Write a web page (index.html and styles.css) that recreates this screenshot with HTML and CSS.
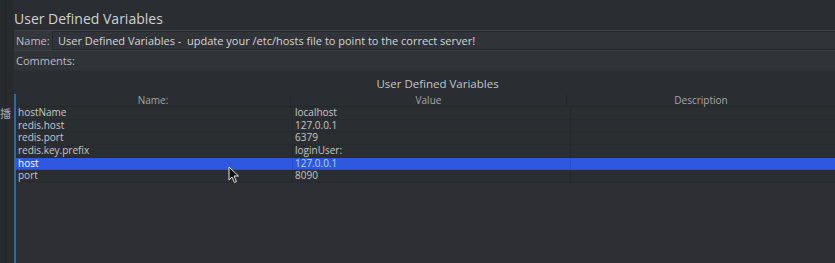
FILE: index.html
```html
<!DOCTYPE html>
<html lang="en">
<head>
    <meta charset="UTF-8">
    <title>User Defined Variables</title>
    <link rel="stylesheet" href="styles.css">
</head>
<body>
    <div class="gutter"><span class="side-char">播</span></div>

    <div class="panel">
        <div class="title">User Defined Variables</div>

        <div class="field-row name-row">
            <span class="label">Name:</span>
            <div class="input">User Defined Variables -&nbsp; update your /etc/hosts file to point to the correct server!</div>
        </div>
        <div class="field-row comments-row">
            <span class="label">Comments:</span>
        </div>

        <div class="table-title">User Defined Variables</div>

        <div class="table">
            <div class="row head">
                <div class="cell c-name">Name:</div>
                <div class="cell c-value">Value</div>
                <div class="cell c-desc">Description</div>
            </div>
            <div class="row">
                <div class="cell c-name">hostName</div>
                <div class="cell c-value">localhost</div>
                <div class="cell c-desc"></div>
            </div>
            <div class="row">
                <div class="cell c-name">redis.host</div>
                <div class="cell c-value">127.0.0.1</div>
                <div class="cell c-desc"></div>
            </div>
            <div class="row">
                <div class="cell c-name">redis.port</div>
                <div class="cell c-value">6379</div>
                <div class="cell c-desc"></div>
            </div>
            <div class="row">
                <div class="cell c-name">redis.key.prefix</div>
                <div class="cell c-value">loginUser:</div>
                <div class="cell c-desc"></div>
            </div>
            <div class="row selected">
                <div class="cell c-name">host</div>
                <div class="cell c-value">127.0.0.1</div>
                <div class="cell c-desc"></div>
            </div>
            <div class="row">
                <div class="cell c-name">port</div>
                <div class="cell c-value">8090</div>
                <div class="cell c-desc"></div>
            </div>
        </div>
    </div>

    <svg class="cursor" width="12" height="18" viewBox="0 0 12 18">
        <path d="M1 1 L1 14 L4 11 L6.5 16.5 L8.5 15.5 L6 10 L10.5 10 Z" fill="#111" stroke="#e8e8e8" stroke-width="1"/>
    </svg>
</body>
</html>
```

FILE: styles.css
```css
body { margin: 0; background: #2a2d31; font-family: "Open Sans", "Noto Sans CJK SC", sans-serif; color: #c6c8ca; height: 263px; overflow: hidden; display: flex; position: relative; }

.gutter { width: 14px; flex: none; background: #282b2e; position: relative; }
.gutter::before { content: ""; position: absolute; left: 5px; top: 0; bottom: 0; width: 1px; background: #232629; }
.side-char { position: absolute; left: 0; top: 105px; font-size: 11px; color: #a9abad; }

.panel { flex: 1; display: flex; flex-direction: column; min-width: 0; }
.title { font-size: 14px; padding: 9px 0 0 0; height: 21px; color: #d0d2d4; }

.field-row { display: flex; align-items: center; height: 19px; font-size: 11px; }
.name-row { background: #33363a; border-top: 1px solid #3d4145; border-bottom: 1px solid #3a3e42; }
.comments-row { background: #303337; border-bottom: 1px solid #2d3034; }
.label { padding-left: 2px; width: 36px; flex: none; color: #bcbec0; }
.input { flex: 1; height: 17px; line-height: 17px; border: 1px solid #26292c; border-right: none; background: #303337; padding-left: 5px; color: #d4d6d8; white-space: nowrap; }

.table-title { text-align: center; font-size: 11.5px; height: 18px; padding: 5px 0 0 26px; color: #c3c5c7; }

.table { flex: 1; border-left: 2px solid #2c6aa0; background: #2d2f35; font-size: 10px; }
.row { display: flex; box-sizing: border-box; height: 12.67px; line-height: 11.67px; border-bottom: 1px solid #282b2e; background: #2b2e31; }
.row:nth-child(odd) { background: #2a2d31; }
.head { height: 13px; line-height: 12px; background: linear-gradient(#3a3e42, #33373b); border-bottom: 1px solid #25282b; color: #a4a7aa; text-align: center; }
.cell { white-space: nowrap; padding-left: 2px; border-right: 1px solid #25282b; }
.c-name { width: 274px; }
.c-value { width: 275px; }
.c-desc { flex: 1; border-right: none; }
.head .cell { padding-left: 0; }
.selected { background: #2f58e0 !important; color: #ffffff; border-bottom-color: #2a4fc4; }
.selected .c-value { color: #a8dcff; }
.selected .cell { border-right-color: #2a4fc4; }

.cursor { position: absolute; left: 228px; top: 166px; }
```
